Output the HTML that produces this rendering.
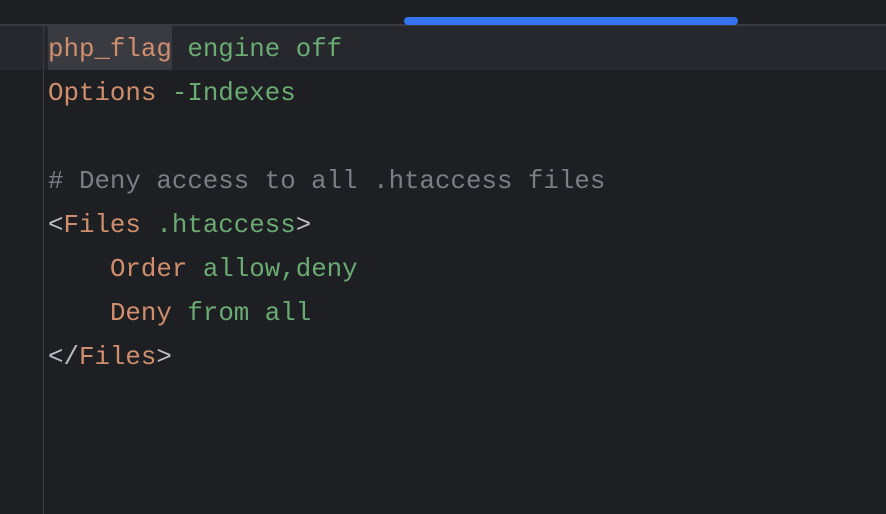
<!DOCTYPE html>
<html><head><style>
body{margin:0;width:886px;height:514px;background:#1e1f22;overflow:hidden;position:relative;font-family:"Liberation Mono",monospace;font-size:25.8px;}
.top{position:absolute;left:0;top:0;width:886px;height:24px;background:#1e1f22;border-bottom:2px solid #393b40;}
.bar{position:absolute;left:404px;top:17px;width:334px;height:8px;background:#3574f0;border-radius:4px;}
.gut{position:absolute;left:43px;top:26px;width:1px;height:488px;background:#393b40;}
.cur{position:absolute;left:0;top:26px;width:886px;height:44px;background:#26282e;}
.hl{position:absolute;left:48px;top:26px;width:124px;height:44px;background:#393b40;}
.l{position:absolute;left:48px;height:44px;line-height:48px;white-space:pre;color:#bcbec4;}
.k{color:#cf8e6d}.v{color:#6aab73}.c{color:#7a7e85}
</style></head><body>
<div class="top"></div><div class="bar"></div>
<div class="cur"></div><div class="hl"></div><div class="gut"></div>
<div class="l" style="top:26px"><span class="k">php_flag</span> <span class="v">engine off</span></div>
<div class="l" style="top:70px"><span class="k">Options</span> <span class="v">-Indexes</span></div>
<div class="l" style="top:158px"><span class="c"># Deny access to all .htaccess files</span></div>
<div class="l" style="top:202px">&lt;<span class="k">Files</span> <span class="v">.htaccess</span>&gt;</div>
<div class="l" style="top:246px">    <span class="k">Order</span> <span class="v">allow,deny</span></div>
<div class="l" style="top:290px">    <span class="k">Deny</span> <span class="v">from all</span></div>
<div class="l" style="top:334px">&lt;/<span class="k">Files</span>&gt;</div>
</body></html>
